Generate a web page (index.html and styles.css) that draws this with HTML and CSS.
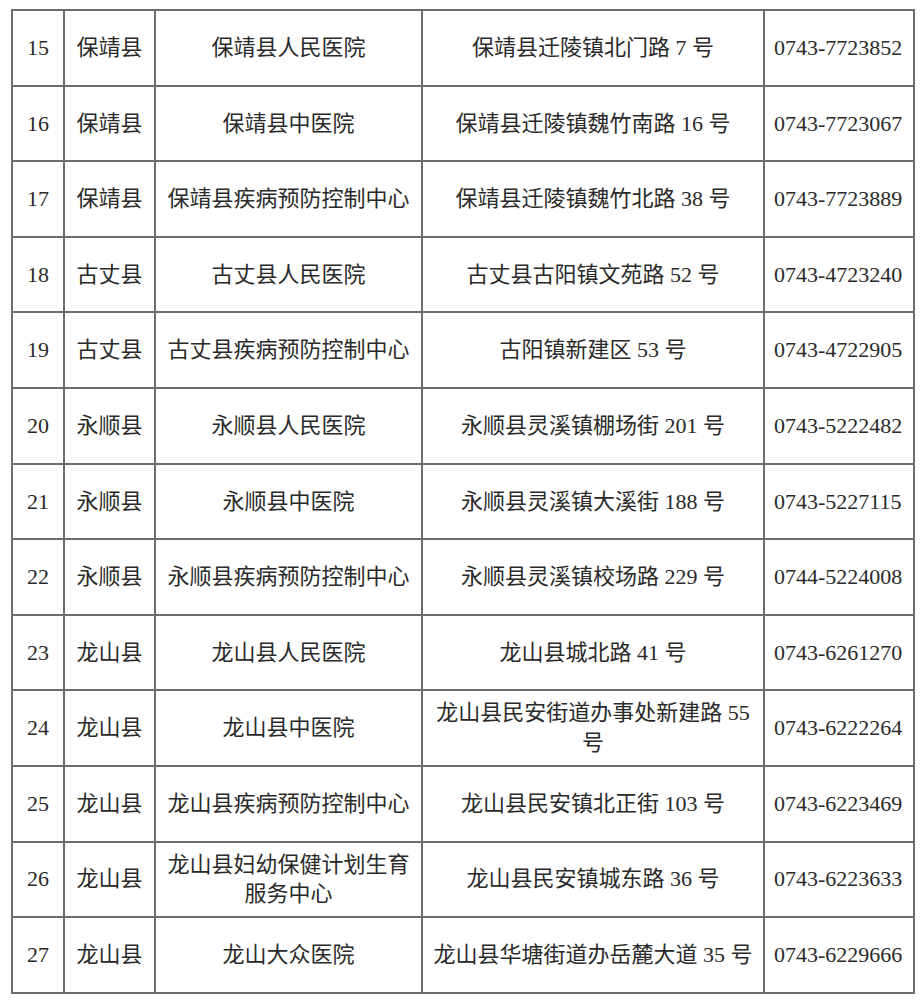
FILE: index.html
```html
<!DOCTYPE html>
<html lang="zh-CN">
<head>
<meta charset="utf-8">
<title>医疗机构名单</title>
<link rel="stylesheet" href="styles.css">
</head>
<body>
<table class="list">
  <colgroup>
    <col class="c-no"><col class="c-county"><col class="c-name"><col class="c-addr"><col class="c-tel">
  </colgroup>
  <tbody>
    <tr><td>15</td><td>保靖县</td><td>保靖县人民医院</td><td>保靖县迁陵镇北门路 7 号</td><td>0743-7723852</td></tr>
    <tr><td>16</td><td>保靖县</td><td>保靖县中医院</td><td>保靖县迁陵镇魏竹南路 16 号</td><td>0743-7723067</td></tr>
    <tr><td>17</td><td>保靖县</td><td>保靖县疾病预防控制中心</td><td>保靖县迁陵镇魏竹北路 38 号</td><td>0743-7723889</td></tr>
    <tr><td>18</td><td>古丈县</td><td>古丈县人民医院</td><td>古丈县古阳镇文苑路 52 号</td><td>0743-4723240</td></tr>
    <tr><td>19</td><td>古丈县</td><td>古丈县疾病预防控制中心</td><td>古阳镇新建区 53 号</td><td>0743-4722905</td></tr>
    <tr><td>20</td><td>永顺县</td><td>永顺县人民医院</td><td>永顺县灵溪镇棚场街 201 号</td><td>0743-5222482</td></tr>
    <tr><td>21</td><td>永顺县</td><td>永顺县中医院</td><td>永顺县灵溪镇大溪街 188 号</td><td>0743-5227115</td></tr>
    <tr><td>22</td><td>永顺县</td><td>永顺县疾病预防控制中心</td><td>永顺县灵溪镇校场路 229 号</td><td>0744-5224008</td></tr>
    <tr><td>23</td><td>龙山县</td><td>龙山县人民医院</td><td>龙山县城北路 41 号</td><td>0743-6261270</td></tr>
    <tr><td>24</td><td>龙山县</td><td>龙山县中医院</td><td>龙山县民安街道办事处新建路 55 号</td><td>0743-6222264</td></tr>
    <tr><td>25</td><td>龙山县</td><td>龙山县疾病预防控制中心</td><td>龙山县民安镇北正街 103 号</td><td>0743-6223469</td></tr>
    <tr><td>26</td><td>龙山县</td><td>龙山县妇幼保健计划生育服务中心</td><td>龙山县民安镇城东路 36 号</td><td>0743-6223633</td></tr>
    <tr><td>27</td><td>龙山县</td><td>龙山大众医院</td><td>龙山县华塘街道办岳麓大道 35 号</td><td>0743-6229666</td></tr>
  </tbody>
</table>
</body>
</html>
```
FILE: styles.css
```css
html, body {
  margin: 0;
  padding: 0;
  background: #ffffff;
}
body {
  padding: 9px 0 0 11px;
}
.list {
  border-collapse: collapse;
  table-layout: fixed;
  width: 902px;
  font-family: "Liberation Serif", "Noto Sans CJK SC", serif;
  font-size: 22px;
  line-height: 1.35;
  color: #2a2a2a;
}
.c-no { width: 52px; }
.c-county { width: 91px; }
.c-name { width: 267px; }
.c-addr { width: 342px; }
.c-tel { width: 150px; }
.list td {
  border: 2px solid #6e6e6e;
  height: 73.6px;
  padding: 0 6px;
  text-align: center;
  vertical-align: middle;
}
.list td:last-child {
  text-align: left;
  padding-left: 9px;
}
```
